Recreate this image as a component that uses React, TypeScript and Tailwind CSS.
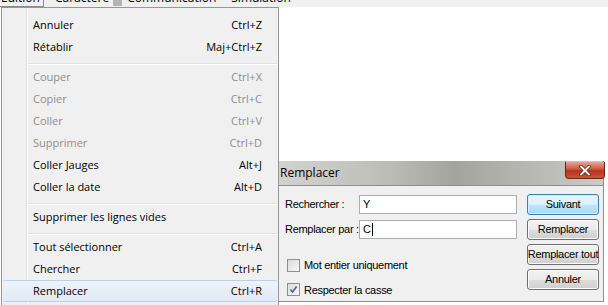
import React from "react";

type Item = { label: string; shortcut?: string; disabled?: boolean; active?: boolean };
type Entry = Item | "sep";

const entries: Entry[] = [
  { label: "Annuler", shortcut: "Ctrl+Z" },
  { label: "Rétablir", shortcut: "Maj+Ctrl+Z" },
  "sep",
  { label: "Couper", shortcut: "Ctrl+X", disabled: true },
  { label: "Copier", shortcut: "Ctrl+C", disabled: true },
  { label: "Coller", shortcut: "Ctrl+V", disabled: true },
  { label: "Supprimer", shortcut: "Ctrl+D", disabled: true },
  { label: "Coller Jauges", shortcut: "Alt+J" },
  { label: "Coller la date", shortcut: "Alt+D" },
  "sep",
  { label: "Supprimer les lignes vides" },
  "sep",
  { label: "Tout sélectionner", shortcut: "Ctrl+A" },
  { label: "Chercher", shortcut: "Ctrl+F" },
  { label: "Remplacer", shortcut: "Ctrl+R", active: true },
];

function MenuRow({ item }: { item: Item }) {
  return (
    <div
      className={`flex h-[22px] items-center justify-between pl-[30px] pr-[15px] ${
        item.active
          ? "rounded-[2px] border-y border-[#b9d1ee] bg-[linear-gradient(#eef3fa,#e2eaf6)]"
          : ""
      } ${item.disabled ? "text-[#8d8d8d]" : "text-black"}`}
    >
      <span>{item.label}</span>
      {item.shortcut && <span>{item.shortcut}</span>}
    </div>
  );
}

function Separator() {
  return (
    <div className="h-[8px] pl-[25px] pt-[5px]">
      <div className="h-px bg-[#e0e0e0]" />
      <div className="h-px bg-white" />
    </div>
  );
}

function Checkbox({ checked }: { checked?: boolean }) {
  return (
    <div className="flex h-[13px] w-[13px] items-center justify-center border border-[#8e8f8f] bg-[linear-gradient(135deg,#dcdcdc,#f6f6f6)]">
      {checked && (
        <svg width="9" height="9" viewBox="0 0 9 9">
          <path d="M1.5 4.5 L3.6 7 L7.6 1.6" fill="none" stroke="#4a5f97" strokeWidth="1.6" />
        </svg>
      )}
    </div>
  );
}

function WinButton({ children, primary }: { children: React.ReactNode; primary?: boolean }) {
  return (
    <div
      className={`flex h-[21px] w-[72px] items-center justify-center whitespace-nowrap rounded-[3px] border tracking-[-0.3px] ${
        primary
          ? "border-[#3c7fb1] bg-[linear-gradient(#eaf6fd_0%,#d9f0fc_50%,#bee6fd_51%,#a7d9f5_100%)] shadow-[inset_0_0_0_1px_#d8ecf8]"
          : "border-[#707070] bg-[linear-gradient(#f2f2f2_0%,#ebebeb_50%,#dddddd_51%,#cfcfcf_100%)] shadow-[inset_0_0_0_1px_#fcfcfc]"
      }`}
    >
      {children}
    </div>
  );
}

export default function App() {
  return (
    <div className="relative h-[305px] w-[608px] overflow-hidden bg-white font-['Open_Sans',sans-serif] text-[11px]">
      {/* menu bar, cut at the top */}
      <div className="relative h-[7px] overflow-hidden bg-[#f0f0f0]">
        <div className="mt-[-10px] flex items-start text-[12px] leading-[16px] text-black">
          <div className="h-[17px] w-[44px] border-r border-b border-[#8a8a8a] pl-[1px]">Edition</div>
          <div className="pl-[11px]">Caractère</div>
          <div className="pl-[18px]">Communication</div>
          <div className="pl-[15px]">Simulation</div>
        </div>
        <div className="absolute left-[113px] top-0 h-[6px] w-[9px] bg-[#b4b4b4]" />
      </div>

      {/* dialog window */}
      <div className="absolute left-[274px] top-[161px] flex h-[141px] w-[330px] flex-col border-r border-b border-[#8e8f8f] bg-[#f0f0f0] font-['Liberation_Sans',sans-serif] text-[11px] tracking-[-0.3px] text-black">
        <div className="relative flex h-[25px] items-center border-b border-[#8e8f8f] bg-[linear-gradient(90deg,#d3d4d0_0%,#bdbdb8_35%,#a4a49f_55%,#b9b9b5_80%,#cbcbc7_100%)] pl-[6px] font-['Open_Sans',sans-serif] text-[12px] tracking-normal">
          Remplacer
          <div className="absolute right-[-2px] top-[1px] flex h-[17px] w-[40px] items-center justify-center rounded-b-[4px] border border-t-0 border-[#6d2418] bg-[linear-gradient(#e8a394,#cf563f_45%,#b8321c_55%,#c8553a)]">
            <svg width="14" height="11" viewBox="0 0 14 11">
              <path d="M3 1.5 L11 9.5 M11 1.5 L3 9.5" stroke="#5a1a10" strokeWidth="3.4" strokeLinecap="round" />
              <path d="M3 1.5 L11 9.5 M11 1.5 L3 9.5" stroke="#ffffff" strokeWidth="2" strokeLinecap="round" />
            </svg>
          </div>
        </div>
        <div className="flex pl-[11px] pt-[9px]">
          <div className="flex w-[232px] flex-col">
            <div className="flex h-[19px] items-center">
              <span className="w-[74px] whitespace-nowrap">Rechercher :</span>
              <div className="flex h-[19px] w-[158px] items-center border border-[#abadb3] bg-white pl-[3px]">Y</div>
            </div>
            <div className="mt-[6px] flex h-[19px] items-center">
              <span className="w-[74px] whitespace-nowrap">Remplacer par :</span>
              <div className="flex h-[19px] w-[158px] items-center border border-[#abadb3] bg-white pl-[3px]">
                C<span className="ml-[1px] h-[13px] w-px bg-black" />
              </div>
            </div>
            <div className="mt-[18px] flex items-center gap-[4px] pl-[2px]">
              <Checkbox />
              <span>Mot entier uniquement</span>
            </div>
            <div className="mt-[8px] flex items-center gap-[4px] pl-[2px]">
              <Checkbox checked />
              <span>Respecter la casse</span>
            </div>
          </div>
          <div className="ml-[10px] mt-[-1px] flex flex-col gap-[4px]">
            <WinButton primary>Suivant</WinButton>
            <WinButton>Remplacer</WinButton>
            <WinButton>Remplacer tout</WinButton>
            <WinButton>Annuler</WinButton>
          </div>
        </div>
      </div>

      {/* dropdown menu */}
      <div className="absolute left-[1px] top-[7px] h-[300px] w-[278px] border border-[#979797] bg-[#f0f0f0] pb-[5px] pt-[6px] pl-[1px] pr-[1px]">
        <div className="absolute bottom-0 left-[24px] top-0 w-px bg-[#e2e3e3]" />
        <div className="absolute bottom-0 left-[25px] top-0 w-px bg-white" />
        <div className="relative flex flex-col">
          {entries.map((e, i) =>
            e === "sep" ? <Separator key={i} /> : <MenuRow key={i} item={e} />
          )}
        </div>
      </div>
    </div>
  );
}
